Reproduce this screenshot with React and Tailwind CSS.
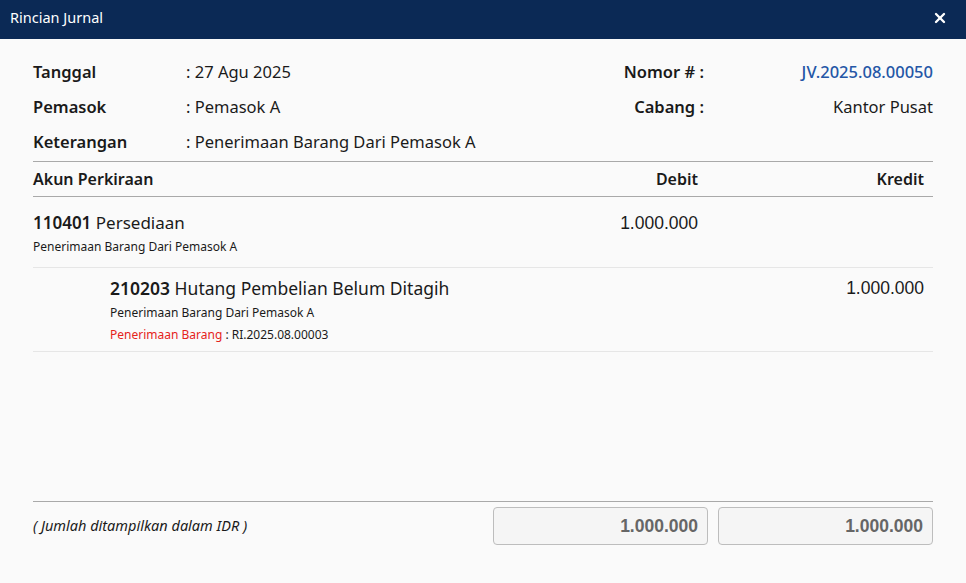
import { X } from 'lucide-react';

const InfoRow = ({ label, value }) => (
    <div className="flex items-center h-[35px]">
        <span className="w-[153px] font-semibold">{label}</span>
        <span>: {value}</span>
    </div>
);

const App = () => {
    return (
        <div className="w-[966px] h-[583px] bg-[#fafafa] text-[#1a1a1a] flex flex-col font-['Noto_Sans',sans-serif]">
            {/* Title bar */}
            <div className="h-[39px] bg-[#0b2955] flex items-center justify-between pl-[10px] pr-[18px] pb-[3px] text-white">
                <span className="text-[14.5px]">Rincian Jurnal</span>
                <X className="w-[16px] h-[16px]" strokeWidth={3.5} />
            </div>

            <div className="flex-1 flex flex-col px-[33px] pt-[16px] text-[16px]">
                {/* Header info */}
                <div className="flex justify-between text-[16.5px]">
                    <div>
                        <InfoRow label="Tanggal" value="27 Agu 2025" />
                        <InfoRow label="Pemasok" value="Pemasok A" />
                        <InfoRow label="Keterangan" value="Penerimaan Barang Dari Pemasok A" />
                    </div>
                    <div className="flex">
                        <div className="flex flex-col items-end w-[140px]">
                            <div className="h-[35px] flex items-center font-semibold">Nomor # :</div>
                            <div className="h-[35px] flex items-center font-semibold">Cabang :</div>
                        </div>
                        <div className="flex flex-col items-end w-[229px]">
                            <div className="h-[35px] flex items-center text-[#2456a6] font-medium">JV.2025.08.00050</div>
                            <div className="h-[35px] flex items-center">Kantor Pusat</div>
                        </div>
                    </div>
                </div>

                {/* Table */}
                <div className="mt-[1px] border-t border-[#a9a9a9]">
                    <div className="flex items-center h-[35px] border-b border-[#a9a9a9] font-semibold">
                        <div className="flex-1">Akun Perkiraan</div>
                        <div className="w-[200px] text-right">Debit</div>
                        <div className="w-[235px] text-right pr-[9px]">Kredit</div>
                    </div>

                    <div className="flex border-b border-[#e6e6e6] pt-[14px] pb-[10px]">
                        <div className="flex-1">
                            <div className="text-[17px] leading-[24px]"><span className="font-semibold">110401</span> Persediaan</div>
                            <div className="text-[12px] leading-[20px] mt-[2px]">Penerimaan Barang Dari Pemasok A</div>
                        </div>
                        <div className="w-[200px] text-right text-[17.5px] leading-[24px] font-['Liberation_Sans',sans-serif]">1.000.000</div>
                        <div className="w-[235px]" />
                    </div>

                    <div className="flex border-b border-[#e6e6e6] pt-[8px] pb-[5px]">
                        <div className="flex-1 pl-[77px]">
                            <div className="text-[17.5px] leading-[24px]"><span className="font-semibold">210203</span> Hutang Pembelian Belum Ditagih</div>
                            <div className="text-[12px] leading-[22px] mt-[2px]">Penerimaan Barang Dari Pemasok A</div>
                            <div className="text-[12px] leading-[22px]"><span className="text-[#e5231b]">Penerimaan Barang</span> : RI.2025.08.00003</div>
                        </div>
                        <div className="w-[200px]" />
                        <div className="w-[235px] text-right pr-[9px] text-[17.5px] leading-[24px] font-['Liberation_Sans',sans-serif]">1.000.000</div>
                    </div>
                </div>

                <div className="flex-1" />

                {/* Footer totals */}
                <div className="border-t border-[#a9a9a9] pt-[5px] mb-[38px] flex items-center">
                    <div className="flex-1 italic text-[14.5px]">( Jumlah ditampilkan dalam IDR )</div>
                    <div className="flex gap-[10px]">
                        {['1.000.000', '1.000.000'].map((v, i) => (
                            <div
                                key={i}
                                className="w-[215px] h-[38px] bg-[#f5f5f5] border border-[#bdbdbd] rounded-[4px] flex items-center justify-end pr-[9px] text-[17.5px] font-bold text-[#666] font-['Liberation_Sans',sans-serif]"
                            >
                                {v}
                            </div>
                        ))}
                    </div>
                </div>
            </div>
        </div>
    );
};

export default App;
